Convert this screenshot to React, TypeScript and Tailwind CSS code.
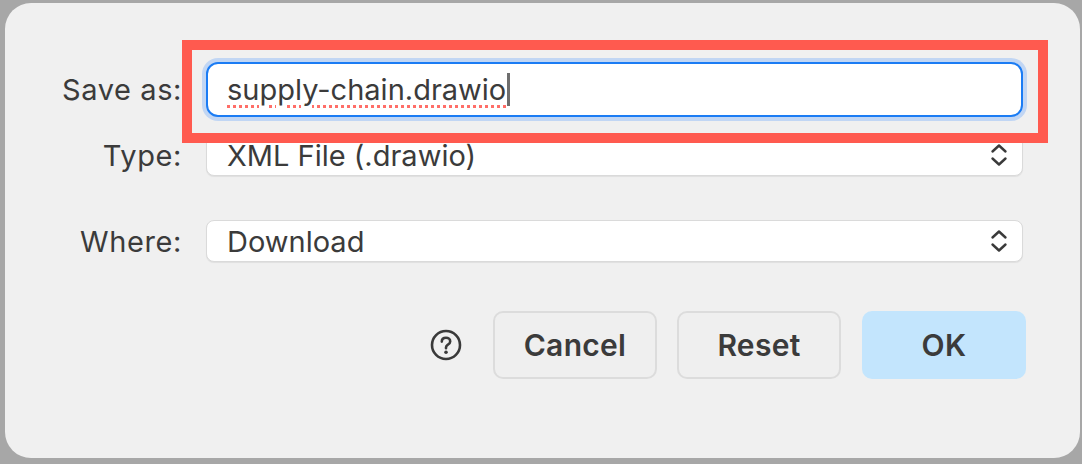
import { ReactNode } from 'react';

const font = { fontFamily: 'Inter, "Noto Sans", sans-serif' };

const UpDown = () => (
  <svg width="18" height="24" viewBox="0 0 18 24" fill="none" stroke="#3a3a3a" strokeWidth="2.4" strokeLinecap="round" strokeLinejoin="round">
    <path d="M2.5 8.5 L9 2.5 L15.5 8.5" />
    <path d="M2.5 15.5 L9 21.5 L15.5 15.5" />
  </svg>
);

const Row = ({ label, children, className }: { label: string; children: ReactNode; className?: string }) => (
  <div className={`flex items-center ${className ?? ''}`}>
    <div className="w-[177px] text-right text-[29px] tracking-[0.6px] text-[#3b3b3b] leading-none">{label}</div>
    <div className="ml-[24px] w-[817px]">{children}</div>
  </div>
);

const Select = ({ value }: { value: string }) => (
  <div className="h-[42px] flex items-center justify-between pl-[20px] pr-[14px] bg-white border border-[#dadada] rounded-[8px] shadow-[0_1px_1px_rgba(0,0,0,0.07)]">
    <span className="text-[29px] text-[#3b3b3b] leading-none">{value}</span>
    <UpDown />
  </div>
);

const Button = ({ children, primary }: { children: ReactNode; primary?: boolean }) => (
  <button
    className={`h-[68px] w-[164px] rounded-[10px] text-[30px] font-semibold tracking-[0.3px] text-[#3b3b3b] leading-none ${
      primary ? 'bg-[#c3e5fd]' : 'bg-[#efefef] border-2 border-[#dcdcdc]'
    }`}
  >
    {children}
  </button>
);

export default function App() {
  return (
    <div className="w-[1082px] h-[464px] bg-[#a7a7a7] pt-[3px] pl-[5px] pr-[2px] pb-[6px]" style={font}>
      <div className="relative h-full bg-[#f0f0f0] rounded-[26px] pt-[59px]">
        {/* file name */}
        <Row label="Save as:">
          <div className="h-[55px] flex items-center pl-[19px] bg-white border-2 border-[#1b7cf4] rounded-[12px] shadow-[0_0_0_4px_#c1d6f4]">
            <span className="text-[29px] text-[#3b3b3b] leading-none underline decoration-dotted decoration-[#ff6e68] decoration-[3px] underline-offset-[5px]">
              supply-chain.drawio
            </span>
            <span className="ml-[1px] w-[3px] h-[33px] bg-[#6e6e6e]" />
          </div>
        </Row>

        <Row label="Type:" className="mt-[17px]">
          <Select value="XML File (.drawio)" />
        </Row>

        <Row label="Where:" className="mt-[44px]">
          <Select value="Download" />
        </Row>

        {/* actions */}
        <div className="mt-[49px] flex items-center justify-end pr-[54px]">
          <svg width="32" height="32" viewBox="0 0 32 32" fill="none" className="mr-[31px]">
            <circle cx="16" cy="16" r="14" stroke="#3a3a3a" strokeWidth="2.6" />
            <path d="M11.8 12.6 C11.8 10.2 13.6 8.8 16 8.8 C18.4 8.8 20.2 10.3 20.2 12.4 C20.2 14.3 18.9 15.1 17.6 15.9 C16.5 16.6 16 17.2 16 18.6 L16 19.2" stroke="#3a3a3a" strokeWidth="2.6" strokeLinecap="round" />
            <circle cx="16" cy="23.2" r="1.8" fill="#3a3a3a" />
          </svg>
          <Button>Cancel</Button>
          <div className="ml-[20px]">
            <Button>Reset</Button>
          </div>
          <div className="ml-[21px]">
            <Button primary>OK</Button>
          </div>
        </div>

        {/* highlight annotation */}
        <div className="absolute left-[177px] top-[37px] w-[866px] h-[103px] border-[10px] border-[#ff5a4f]" />
      </div>
    </div>
  );
}
